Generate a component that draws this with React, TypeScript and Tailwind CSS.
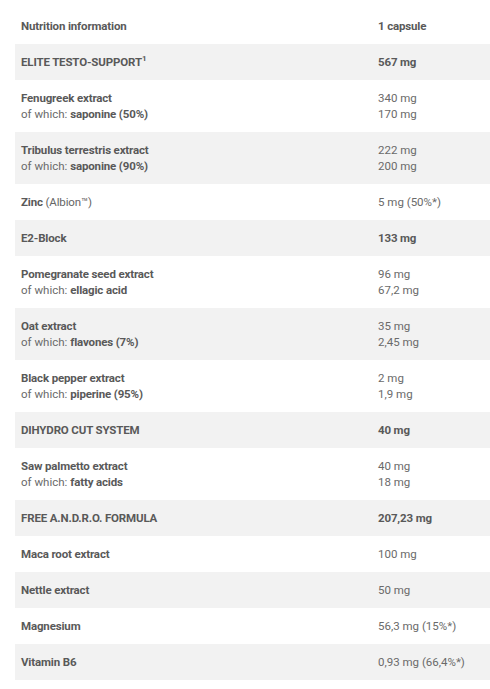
import React from 'react';

type Row = {
  name: React.ReactNode;
  sub?: React.ReactNode;
  value: string;
  subValue?: string;
  strong?: boolean;
};

const rows: Row[] = [
  { name: <>ELITE TESTO-SUPPORT<sup className="text-[8px] -top-[5px]">1</sup></>, value: '567 mg', strong: true },
  { name: 'Fenugreek extract', sub: 'saponine (50%)', value: '340 mg', subValue: '170 mg' },
  { name: 'Tribulus terrestris extract', sub: 'saponine (90%)', value: '222 mg', subValue: '200 mg' },
  { name: <>Zinc <span className="font-normal text-[#666]">(Albion™)</span></>, value: '5 mg (50%*)' },
  { name: 'E2-Block', value: '133 mg', strong: true },
  { name: 'Pomegranate seed extract', sub: 'ellagic acid', value: '96 mg', subValue: '67,2 mg' },
  { name: 'Oat extract', sub: 'flavones (7%)', value: '35 mg', subValue: '2,45 mg' },
  { name: 'Black pepper extract', sub: 'piperine (95%)', value: '2 mg', subValue: '1,9 mg' },
  { name: 'DIHYDRO CUT SYSTEM', value: '40 mg', strong: true },
  { name: 'Saw palmetto extract', sub: 'fatty acids', value: '40 mg', subValue: '18 mg' },
  { name: 'FREE A.N.D.R.O. FORMULA', value: '207,23 mg', strong: true },
  { name: 'Maca root extract', value: '100 mg' },
  { name: 'Nettle extract', value: '50 mg' },
  { name: 'Magnesium', value: '56,3 mg (15%*)' },
  { name: 'Vitamin B6', value: '0,93 mg (66,4%*)' },
];

export default function App() {
  return (
    <div className="w-[490px] h-[689px] bg-white overflow-hidden pl-[15px] pt-2 text-[11.5px] leading-4 text-[#595959] font-['Roboto',sans-serif]">
      <div className="grid grid-cols-[357px_1fr] font-bold">
        <div className="py-[10px] pl-[6px] tracking-[-0.15px]">Nutrition information</div>
        <div className="py-[10px] pl-[6px] tracking-[-0.15px]">1 capsule</div>
      </div>
      {rows.map((r, i) => (
        <div
          key={i}
          className={`grid grid-cols-[357px_1fr] ${i % 2 === 0 ? 'bg-[#f2f2f2]' : 'bg-white'}`}
        >
          <div className="py-[10px] pl-[6px]">
            <div className="font-bold tracking-[-0.15px]">{r.name}</div>
            {r.sub && (
              <div className="text-[#6a6a6a]">
                of which: <span className="font-bold text-[#595959] tracking-[-0.15px]">{r.sub}</span>
              </div>
            )}
          </div>
          <div className="py-[10px] pl-[6px]">
            <div className={r.strong ? 'font-bold tracking-[-0.15px]' : 'text-[#6a6a6a]'}>{r.value}</div>
            {r.subValue && <div className="text-[#6a6a6a]">{r.subValue}</div>}
          </div>
        </div>
      ))}
    </div>
  );
}
